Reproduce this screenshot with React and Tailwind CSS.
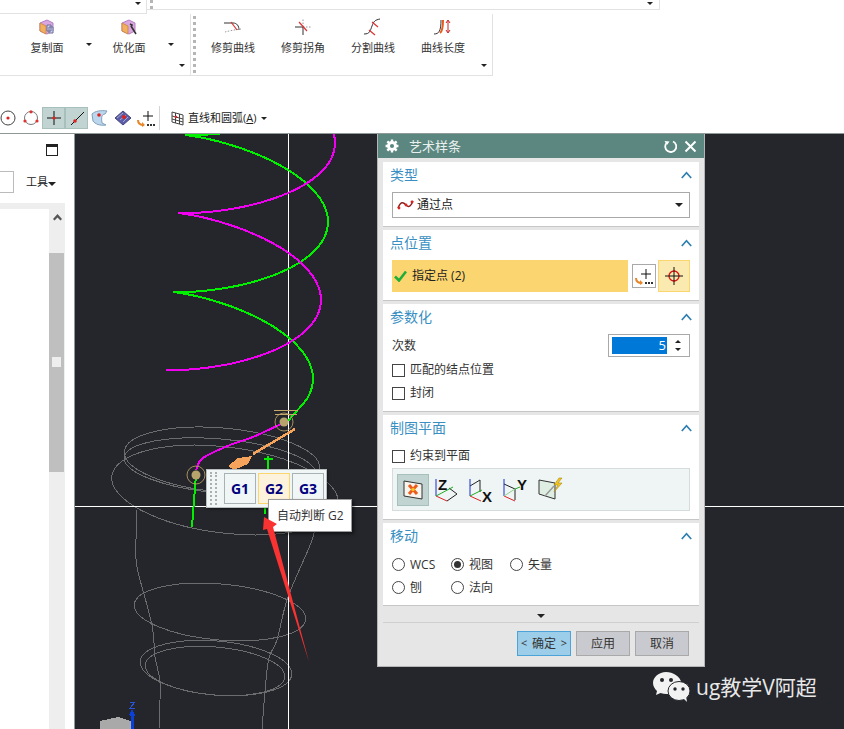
const helix = (y0, left, leftStep, right, rightStep, from, to) => {
  const pts = [];
  for (let s = from; s <= to + 0.001; s += 0.02) {
    const t = Math.PI + 2 * Math.PI * s;
    const l = left - leftStep * s;
    const r = right - rightStep * s;
    const x = (l + r) / 2 + ((r - l) / 2) * Math.cos(t);
    const y = y0 + 157 * s - 25 * Math.sin(2 * Math.PI * s) + 10 * Math.sin(Math.PI * s) ** 2;
    pts.push(`${x.toFixed(1)} ${y.toFixed(1)}`);
  }
  return "M" + pts.join("L");
};

const smooth = (pts) => {
  let d = `M${pts[0][0]} ${pts[0][1]}`;
  for (let i = 0; i < pts.length - 1; i++) {
    const p0 = pts[i - 1] || pts[i];
    const p1 = pts[i];
    const p2 = pts[i + 1];
    const p3 = pts[i + 2] || p2;
    d += ` C${p1[0] + (p2[0] - p0[0]) / 6} ${p1[1] + (p2[1] - p0[1]) / 6} ${p2[0] - (p3[0] - p1[0]) / 6} ${p2[1] - (p3[1] - p1[1]) / 6} ${p2[0]} ${p2[1]}`;
  }
  return d;
};

const Caret = ({ big, className = "" }) => (
  <div
    className={`h-0 w-0 border-x-transparent border-t-[#222] ${
      big ? "border-x-[4px] border-t-[4px]" : "border-x-[3px] border-t-[3px]"
    } ${className}`}
  />
);

const Grip = ({ className = "" }) => (
  <div className={`w-[3px] border-l-[3px] border-dotted border-[#b5b5b5] ${className}`} />
);

const CopyFaceIcon = ({ wand }) => (
  <svg width="16" height="16" viewBox="0 0 16 16">
    <path d="M8 1l6 3v8l-6 3-7-3V4z" fill="#d9a7e0" stroke="#b57cc5" />
    <path d="M1 4l6 3v8l-6-3z" fill="#f0b060" stroke="#d08a50" />
    {wand ? (
      <path d="M10 7l5 8M9 5l2 1-1 2" stroke="#333" strokeWidth="1.6" fill="none" />
    ) : (
      <path d="M8 6h4v6H8zM10 8h4v6h-4z" fill="#cfd4ea" stroke="#6a6f9a" />
    )}
  </svg>
);

const TrimIcon = ({ kind }) => (
  <svg width="20" height="18" viewBox="0 0 20 18" fill="none">
    {kind === 0 && (
      <>
        <path d="M1 5h9c4 0 6 3 6 7" stroke="#333" />
        <path d="M2 14c4-1 8-2 16-3" stroke="#999" strokeDasharray="1.5 1.5" />
        <path d="M8 4l6 8" stroke="#d33" strokeWidth="1.2" />
      </>
    )}
    {kind === 1 && (
      <>
        <path d="M2 9h9M10 9v8" stroke="#333" />
        <path d="M10 9h8M10 9V1" stroke="#999" strokeDasharray="1.5 1.5" />
        <path d="M6 4l8 9" stroke="#d33" strokeWidth="1.2" />
      </>
    )}
    {kind === 2 && (
      <>
        <path d="M1 16c6 0 6-3 8-8s3-6 8-7" stroke="#333" />
        <path d="M6 12l6 5M9 4l6 5" stroke="#d33" strokeWidth="1.2" />
      </>
    )}
    {kind === 3 && (
      <>
        <path d="M1 16c5 0 7-3 7-14" stroke="#333" />
        <path d="M7 15c3-2 3-8 3-13" stroke="#e85a1a" strokeWidth="2" />
        <path d="M15 3v11M13 5l2-3 2 3M13 12l2 3 2-3" stroke="#c22" />
      </>
    )}
  </svg>
);

const RibbonTool = ({ label, width, children }) => (
  <div className={`flex flex-col items-center pt-[4px] ${width}`}>
    <div className="flex h-[17px] items-center">{children}</div>
    <div className="mt-[5px] text-[11px] leading-[16px] text-[#333]">{label}</div>
  </div>
);

const TopArea = () => (
  <div className="h-[134px] shrink-0 border-b border-[#8f9a98]">
    <div className="flex h-[14px] w-[660px]">
      <div className="flex h-[14px] w-[147px] items-start justify-end border-b border-r border-[#e2e2e2] pr-[5px] pt-[2px]">
        <Caret />
      </div>
      <div className="flex h-[10px] flex-1 border-b border-r border-[#e2e2e2] pl-[3px]">
        <Grip className="h-[9px]" />
        <div className="flex-1" />
        <Caret className="mr-[6px] mt-[2px]" />
      </div>
    </div>
    <div className="flex h-[62px] w-[493px] border-b border-r border-[#e2e2e2]">
      <div className="flex w-[191px] border-r border-[#e2e2e2] pl-[6px]">
        <RibbonTool label="复制面" width="w-[82px]"><CopyFaceIcon /></RibbonTool>
        <div className="w-0 pt-[29px]"><Caret className="-ml-[2px]" /></div>
        <RibbonTool label="优化面" width="w-[82px]"><CopyFaceIcon wand /></RibbonTool>
        <div className="w-0 pt-[29px]"><Caret className="-ml-[2px]" /></div>
        <div className="flex flex-1 items-end justify-end pb-[8px] pr-[5px]"><Caret /></div>
      </div>
      <div className="flex flex-1 pl-[2px]">
        <Grip className="my-[2px]" />
        <div className="w-[2px]" />
        <RibbonTool label="修剪曲线" width="w-[70px]"><TrimIcon kind={0} /></RibbonTool>
        <RibbonTool label="修剪拐角" width="w-[70px]"><TrimIcon kind={1} /></RibbonTool>
        <RibbonTool label="分割曲线" width="w-[70px]"><TrimIcon kind={2} /></RibbonTool>
        <RibbonTool label="曲线长度" width="w-[70px]"><TrimIcon kind={3} /></RibbonTool>
        <div className="flex flex-1 items-end justify-end pb-[8px] pr-[5px]"><Caret /></div>
      </div>
    </div>
    <Toolbar />
  </div>
);

const ToolSlot = ({ active, children }) => (
  <div className={`flex h-[22px] w-[23px] items-center justify-center ${active ? "border border-[#a8c0bb] bg-[#c2d4d1]" : ""}`}>
    {children}
  </div>
);

const PointPick = ({ size = 20 }) => (
  <svg width={size} height={size} viewBox="0 0 20 20" fill="none">
    <path d="M12 3v10M7 8h10" stroke="#111" />
    <path d="M2 12c0 4 2 5 6 5" stroke="#e8862a" strokeWidth="2" />
    <path d="M6 14l3 3-3 2" fill="#e8862a" />
    <path d="M11 17h2M14 17h2M17 17h2" stroke="#333" strokeWidth="2" />
  </svg>
);

const Toolbar = () => (
  <div className="-ml-1 mt-[31px] flex h-[22px] items-center">
    <ToolSlot>
      <svg width="16" height="16" viewBox="0 0 16 16" fill="none">
        <circle cx="8" cy="8" r="7" stroke="#444" />
        <circle cx="8" cy="8" r="1.6" fill="#d22" />
      </svg>
    </ToolSlot>
    <ToolSlot>
      <svg width="16" height="16" viewBox="0 0 16 16" fill="none">
        <circle cx="8" cy="8" r="6.5" stroke="#777" />
        <circle cx="8" cy="1.800" r="1.6" fill="#d33" />
        <circle cx="2" cy="11" r="1.6" fill="#d33" />
        <circle cx="14" cy="11" r="1.6" fill="#d33" />
      </svg>
    </ToolSlot>
    <ToolSlot active>
      <svg width="16" height="16" viewBox="0 0 16 16" fill="none">
        <path d="M8 1v14M1 8h14" stroke="#111" />
        <circle cx="8" cy="8" r="1.6" fill="#d22" />
      </svg>
    </ToolSlot>
    <ToolSlot active>
      <svg width="16" height="16" viewBox="0 0 16 16" fill="none">
        <path d="M2 15L15 2" stroke="#111" />
        <circle cx="6" cy="11" r="1.8" fill="#d22" />
      </svg>
    </ToolSlot>
    <ToolSlot>
      <svg width="18" height="18" viewBox="0 0 18 18">
        <path d="M1 5c3-3 9-4 15-3l-2 3c-3 0-4 3-3 9l4 2c-6 1-11-1-13-4z" fill="#bcd6ee" stroke="#7fa0bb" />
        <circle cx="8" cy="6" r="1.8" fill="#d22" />
      </svg>
    </ToolSlot>
    <ToolSlot>
      <svg width="18" height="18" viewBox="0 0 18 18">
        <path d="M1 9l8-7 8 7-8 7z" fill="#5b5ea6" stroke="#44467f" />
        <path d="M3 9l6-5M6 11l6-5M9 13l5-5" stroke="#c7c8ea" strokeWidth=".7" />
        <circle cx="10" cy="8" r="2" fill="#d22" />
      </svg>
    </ToolSlot>
    <ToolSlot><PointPick /></ToolSlot>
    <div className="ml-[2px] h-[24px] w-px bg-[#d5d5d5]" />
    <div className="ml-[7px] flex w-[20px] justify-center">
      <svg width="13" height="15" viewBox="0 0 13 15" fill="none" stroke="#444">
        <path d="M1 1l11 3v10L1 11zM1 5l11 3M1 8l11 3M4.500 2v10M8.500 3v10" />
        <circle cx="5" cy="6" r="1.3" fill="#d22" stroke="none" />
      </svg>
    </div>
    <div className="ml-[1px] text-[11px] leading-[16px] text-[#222]">
      直线和圆弧(<span className="underline">A</span>)
    </div>
    <Caret className="ml-[5px]" />
  </div>
);

const LeftPanel = () => (
  <div className="flex w-[75px] shrink-0 flex-col border-r border-[#8f9a98] bg-white">
    <div className="flex h-[37px] justify-end pr-[16px] pt-[10px]">
      <div className="h-[12px] w-[12px] border border-t-[3px] border-[#222]" />
    </div>
    <div className="flex h-[22px] items-center">
      <div className="h-[22px] w-[14px] border-y-[1px] border-r-[1px] border-[#bbb]" />
      <div className="ml-[12px] text-[11px] leading-[16px] text-[#222]">工具</div>
      <Caret big className="mt-[3px]" />
    </div>
    <div className="mt-[10px] flex w-[65px] flex-1 flex-col bg-[#eee] pt-[6px]">
      <div className="flex flex-1">
        <div className="w-[49px] bg-white" />
        <div className="flex flex-1 flex-col">
          <div className="flex h-[44px] justify-center pt-[5px]">
            <svg width="9" height="7" viewBox="0 0 9 7"><path d="M4.500 0L9 5 7.500 6.500 4.500 3.500 1.500 6.500 0 5z" fill="#555" /></svg>
          </div>
          <div className="flex h-[219px] w-[15px] flex-col items-center bg-[#bfbfbf] pt-[104px]">
            <div className="h-[10px] w-[9px] bg-[#eee]" />
          </div>
        </div>
      </div>
    </div>
  </div>
);

const Chevron = () => (
  <svg width="11" height="8" viewBox="0 0 11 8" fill="none">
    <path d="M.8 7l4.700-5.200L10.200 7" stroke="#2f7fb0" strokeWidth="1.7" />
  </svg>
);

const Section = ({ title, height, children }) => (
  <div className={`bg-white px-[9px] shadow-[0_1px_0_#c6c6c6] ${height}`}>
    <div className="-mx-[2px] flex h-[25px] items-center justify-between">
      <span className="text-[14px] leading-[18px] text-[#3a8fc2]">{title}</span>
      <Chevron />
    </div>
    {children}
  </div>
);

const Check = ({ label, className = "" }) => (
  <div className={`flex items-center ${className}`}>
    <div className="h-[13px] w-[13px] border border-[#444]" />
    <span className="ml-[5px] text-[12px] leading-[16px] text-[#333]">{label}</span>
  </div>
);

const Radio = ({ label, on, width }) => (
  <div className={`flex items-center ${width}`}>
    <div className="flex h-[13px] w-[13px] items-center justify-center rounded-full border border-[#444]">
      {on && <div className="h-[7px] w-[7px] rounded-full bg-[#333]" />}
    </div>
    <span className="ml-[5px] text-[12px] leading-[16px] text-[#333]">{label}</span>
  </div>
);

const AxisLetter = ({ x, y, children }) => (
  <text x={x} y={y} fontSize="15" fontWeight="700" fill="#111" fontFamily="Liberation Sans">
    {children}
  </text>
);

const PlaneZ = () => (
  <svg width="26" height="26" viewBox="0 0 26 26" fill="none">
    <path d="M12 24l10-7-8-6" stroke="#222" />
    <path d="M1 2v17" stroke="#1a2fd0" />
    <path d="M1 19l11 5" stroke="#d22" />
    <path d="M1 19l17-9" stroke="#2a2" />
    <AxisLetter x="3" y="13">Z</AxisLetter>
  </svg>
);

const PlaneX = () => (
  <svg width="26" height="26" viewBox="0 0 26 26" fill="none">
    <path d="M1 9l10-6v12" stroke="#222" />
    <path d="M1 2v17" stroke="#1a2fd0" />
    <path d="M1 19l11 5" stroke="#d22" />
    <path d="M1 19l12-6" stroke="#2a2" />
    <AxisLetter x="13" y="25">X</AxisLetter>
  </svg>
);

const PlaneY = () => (
  <svg width="26" height="26" viewBox="0 0 26 26" fill="none">
    <path d="M1 7l11 5v11" stroke="#222" />
    <path d="M1 2v17" stroke="#1a2fd0" />
    <path d="M1 19l11 5" stroke="#d22" />
    <path d="M1 19l11-7" stroke="#8fd08f" />
    <path d="M12 12l5-2" stroke="#2a2" />
    <AxisLetter x="14" y="13">Y</AxisLetter>
  </svg>
);

const Btn = ({ children, primary }) => (
  <div className={`flex h-[25px] w-[54px] items-center justify-center border text-[12px] text-[#333] ${primary ? "border-[#4ba3d8] bg-[#9ccde9]" : "border-[#a9a9a9] bg-[#c9cacf]"}`}>
    {children}
  </div>
);

const Dialog = () => (
  <div className="absolute left-[302px] top-0 flex h-[533px] w-[328px] flex-col border-x border-b border-[#b5b5b5] bg-[#e6e6e6]">
    <div className="flex h-[24px] shrink-0 items-center bg-[#5b8780] px-[7px] text-white">
      <svg width="14" height="14" viewBox="0 0 24 24" fill="none">
        <circle cx="12" cy="12" r="6" stroke="#fff" strokeWidth="5" />
        <path d="M12 1v5M12 18v5M1 12h5M18 12h5M4 4l4 4M16 16l4 4M4 20l4-4M16 8l4-4" stroke="#fff" strokeWidth="4" />
      </svg>
      <span className="ml-[10px] text-[13px] leading-[18px] text-[#e9f0ee]">艺术样条</span>
      <div className="flex-1" />
      <svg width="14" height="14" viewBox="0 0 14 14" fill="none">
        <path d="M10 2.500A5.500 5.500 0 1 1 3.500 4" stroke="#fff" strokeWidth="1.8" />
        <path d="M1.500 2l5 .5-2.500 3.500z" fill="#fff" />
      </svg>
      <svg className="ml-[7px]" width="13" height="13" viewBox="0 0 13 13" fill="none">
        <path d="M1.500 1.500l10 10M11.500 1.500l-10 10" stroke="#fff" strokeWidth="2" />
      </svg>
    </div>

    <div className="flex flex-1 flex-col gap-[4px] px-[5px] pt-[4px]">
      <Section title="类型" height="h-[64px]">
        <div className="mt-[5px] flex h-[26px] items-center border border-[#a9a9a9] px-[4px]">
          <svg width="20" height="12" viewBox="0 0 20 12" fill="none">
            <path d="M1 9c3-8 6-5 8-3s4 3 7-4" stroke="#8c1c1c" strokeWidth="1.4" />
            <circle cx="2" cy="9" r="1.4" fill="#d22" />
            <circle cx="9" cy="6" r="1.4" fill="#d22" />
            <circle cx="15" cy="3" r="1.4" fill="#d22" />
          </svg>
          <span className="text-[12px] leading-[16px] text-[#222]">通过点</span>
          <div className="flex-1" />
          <Caret big className="mr-[2px]" />
        </div>
      </Section>

      <Section title="点位置" height="h-[70px]">
        <div className="mt-[5px] flex items-center">
          <div className="flex h-[32px] w-[236px] items-center bg-[#fbd56f] pl-[2px]">
            <svg width="13" height="12" viewBox="0 0 13 12" fill="none">
              <path d="M1 6.500l4 4L12 1.500" stroke="#1fae3a" strokeWidth="2.600" />
            </svg>
            <span className="ml-[5px] text-[12px] leading-[16px] text-[#222]">指定点 (2)</span>
          </div>
          <div className="ml-[4px] flex h-[24px] w-[24px] items-center justify-center border border-[#a9a9a9]">
            <PointPick size={20} />
          </div>
          <div className="ml-[2px] flex h-[32px] w-[32px] items-center justify-center border border-[#fad570] bg-[#fbeab0]">
            <svg width="20" height="20" viewBox="0 0 20 20" fill="none">
              <circle cx="10" cy="10" r="5" stroke="#d11" strokeWidth="1.3" />
              <path d="M10 1v18M1 10h18" stroke="#111" />
            </svg>
          </div>
        </div>
      </Section>

      <Section title="参数化" height="h-[107px]">
        <div className="mt-[5px] flex items-center justify-between">
          <span className="text-[12px] leading-[16px] text-[#333]">次数</span>
          <div className="flex h-[23px] w-[82px] items-center border border-[#a9a9a9] pl-[3px]">
            <div className="h-[17px] w-[55px] bg-[#0078d7] pr-[1px] text-right text-[13px] leading-[17px] text-white">5</div>
            <div className="flex flex-1 flex-col items-center gap-[5px]">
              <Caret className="rotate-180" />
              <Caret />
            </div>
          </div>
        </div>
        <Check className="mt-[5px]" label="匹配的结点位置" />
        <Check className="mt-[7px]" label="封闭" />
      </Section>

      <Section title="制图平面" height="h-[104px]">
        <Check className="mt-[8px]" label="约束到平面" />
        <div className="mt-[4px] flex h-[43px] items-center border border-[#d5dcdb] bg-[#eff5f4] pl-[4px]">
          <div className="flex h-[32px] w-[32px] items-center justify-center border border-[#a8c0bb] bg-[#c2d4d1]">
            <svg width="22" height="22" viewBox="0 0 22 22">
              <path d="M2 2l18 3v15L2 17z" fill="#f7f5ee" stroke="#333" />
              <path d="M7 6l8 9M15 6l-8 9" stroke="#ec5a1c" strokeWidth="3" />
              <circle cx="11" cy="10.500" r="1.800" fill="#f6c21c" />
            </svg>
          </div>
          <div className="ml-[6px] w-[34px]"><PlaneZ /></div>
          <div className="w-[34px]"><PlaneX /></div>
          <div className="w-[35px]"><PlaneY /></div>
          <div className="w-[26px]">
            <svg width="26" height="26" viewBox="0 0 26 26">
              <path d="M1 3l16 3v16L1 17z" fill="#dfeee3" stroke="#333" />
              <path d="M7 19L16 9" stroke="#999" strokeWidth="1.5" />
              <path d="M21 1l-5 7h4l-4 7 8-9h-4l4-5z" fill="#f5c51c" stroke="#a8861c" strokeWidth=".6" />
            </svg>
          </div>
        </div>
      </Section>

      <Section title="移动" height="h-[82px]">
        <div className="mt-[5px] flex h-[23px] items-center">
          <Radio label="WCS" width="w-[59px]" />
          <Radio label="视图" on width="w-[59px]" />
          <Radio label="矢量" width="w-[59px]" />
        </div>
        <div className="flex h-[23px] items-center">
          <Radio label="刨" width="w-[59px]" />
          <Radio label="法向" width="w-[59px]" />
        </div>
      </Section>

      <div className="flex h-[14px] items-center justify-center border-b border-[#cfcfcf]">
        <Caret big />
      </div>
      <div className="mt-[4px] flex justify-end gap-[5px] pr-[10px]">
        <Btn primary>
          <span className="flex w-full justify-between px-[3px] text-[11px]">
            <span>&lt;</span>
            <span className="text-[12px]">确定</span>
            <span>&gt;</span>
          </span>
        </Btn>
        <Btn>应用</Btn>
        <Btn>取消</Btn>
      </div>
    </div>
  </div>
);

const GBtn = ({ label, active }) => (
  <div className={`flex h-[31px] w-[32px] items-center justify-center border text-[14px] font-bold text-[#00007f] ${active ? "border-[#fad570] bg-[#fdf3dc]" : "border-[#a9b2b2] bg-[#f0f5f5]"}`}>
    {label}
  </div>
);

const Popup = () => (
  <>
    <div className="absolute left-[131px] top-[335px] flex h-[39px] w-[121px] items-center border border-[#b8bdbd] bg-[#f0f5f5] pl-[3px] shadow-[1px_1px_2px_rgba(0,0,0,.5)]">
      <div className="h-[33px] w-[7px] border-x-[2px] border-dotted border-[#aab0b0]" />
      <div className="ml-[7px] flex gap-[2px]">
        <GBtn label="G1" />
        <GBtn label="G2" active />
        <GBtn label="G3" />
      </div>
    </div>
    <div className="absolute left-[193px] top-[365px] flex h-[33px] w-[84px] items-center border border-[#9a9a9a] bg-white pl-[8px] text-[12px] text-[#333] shadow-[2px_2px_3px_rgba(0,0,0,.5)]">
      自动判断 G2
    </div>
  </>
);

const magentaC = [[196, 470], [203, 458], [230, 445], [253, 437], [283, 423]];

const Wire = () => (
  <svg className="absolute inset-0" width="769" height="595" viewBox="75 134 769 595" fill="none" shapeRendering="crispEdges">
    <g stroke="#6a6c6e" strokeWidth="1">
      <ellipse cx="222" cy="460" rx="98" ry="32" transform="rotate(5 222 460)" />
      <ellipse cx="220" cy="466" rx="96" ry="27" transform="rotate(5 220 466)" />
      <ellipse cx="225" cy="490" rx="114" ry="43" transform="rotate(7 225 490)" />
      <ellipse cx="220" cy="612" rx="86" ry="28" transform="rotate(5 220 612)" />
      <ellipse cx="216" cy="668" rx="76" ry="27" transform="rotate(5 216 668)" />
      <ellipse cx="215" cy="671" rx="70" ry="24" transform="rotate(5 215 671)" />
      <path d={smooth([[137, 510], [136, 540], [137, 567], [152, 625], [155, 657], [160, 683], [159, 729]])} />
      <path d={smooth([[318, 510], [312, 540], [288, 597], [277, 640], [268, 663], [262, 729]])} />
    </g>
    <path d="M288.500 134V729M75 506.500H844" stroke="#fff" strokeWidth="1" />
    <path d={helix(135, 185, 12, 335.500, 15, -0.2, 1.6) + "L288 421"} stroke="#00f000" strokeWidth="2" />
    <path d={helix(213, 178, 12, 328, 14, -0.56, 1)} stroke="#f000f0" strokeWidth="2" />
    <path d={smooth(magentaC)} stroke="#f000f0" strokeWidth="2" />
    <path d="M196 475L192 527M268 456V472M264 459H273M265 505V514" stroke="#00f000" strokeWidth="2" />
    <path d="M295 429L253 454" stroke="#f6a35c" strokeWidth="2.500" />
    <path d="M252 456L238 458 228 466 234 470 248 464z" fill="#f6a35c" />
    <path d="M274 410H298M275 414H297" stroke="#c6a86a" />
    <g stroke="#c6a86a" strokeWidth=".8" shapeRendering="auto">
      <circle cx="284" cy="422" r="9" />
      <circle cx="196" cy="475" r="9" />
    </g>
    <g shapeRendering="auto">
      <circle cx="284" cy="422" r="4.500" fill="#b7a46c" />
      <circle cx="196" cy="475" r="4.500" fill="#b7a46c" />
    </g>
    <path d="M100 721l18-4 13 4v8H100z" fill="#a9a9a9" />
    <path d="M132 729V714" stroke="#0a3fd8" strokeWidth="3" />
    <path d="M132 709l3 6-3 3-3-3z" fill="#0a3fd8" />
    <path d="M130 702h5l-5 6h5" stroke="#2a55d8" />
  </svg>
);

const RedArrow = () => (
  <svg className="absolute inset-0" width="769" height="595" viewBox="75 134 769 595">
    <path d="M264 517L277 524 273 527 309 662 267 529 263 530z" fill="#f93232" />
  </svg>
);

const Watermark = () => (
  <div className="absolute left-[578px] top-[537px] flex items-center">
    <svg width="37" height="32" viewBox="0 0 37 32">
      <path d="M13 1C6 1 0 6 0 12c0 3.500 2 6 4 8l-1 4 4.500-2c2 .6 4 1 6 1h3c-1-6 3-11 12-11C27 5 20 1 13 1z" fill="#f2f2f2" />
      <circle cx="9" cy="9" r="2" fill="#24262b" />
      <circle cx="18" cy="9" r="2" fill="#24262b" />
      <ellipse cx="26" cy="20" rx="11" ry="9.500" fill="#f2f2f2" stroke="#24262b" />
      <path d="M30 27l4 4-1-6z" fill="#f2f2f2" />
      <circle cx="22" cy="18" r="1.700" fill="#24262b" />
      <circle cx="30" cy="18" r="1.700" fill="#24262b" />
    </svg>
    <span className="ml-[6px] text-[21px] leading-[28px] text-[#e8e8e8]">ug教学V阿超</span>
  </div>
);

export default function App() {
  return (
    <div className="flex h-[729px] w-[844px] flex-col overflow-hidden bg-white font-['Open_Sans','Noto_Sans_CJK_SC',sans-serif]">
      <TopArea />
      <div className="flex flex-1">
        <LeftPanel />
        <div className="relative flex-1 bg-[#24262b]">
          <Wire />
          <Popup />
          <RedArrow />
          <Dialog />
          <Watermark />
        </div>
      </div>
    </div>
  );
}
